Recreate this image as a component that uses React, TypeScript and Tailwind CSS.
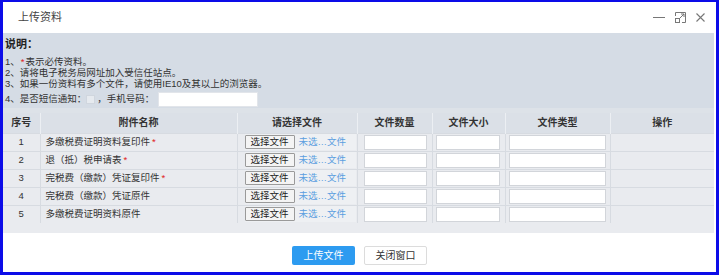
const rows = [
  { name: "多缴税费证明资料复印件", req: true },
  { name: "退（抵）税申请表", req: true },
  { name: "完税费（缴款）凭证复印件", req: true },
  { name: "完税费（缴款）凭证原件", req: false },
  { name: "多缴税费证明资料原件", req: false },
];

function RestoreIcon() {
  return (
    <svg width="11" height="11" viewBox="0 0 11 11" fill="none" stroke="#777" strokeWidth="1">
      <path d="M0.5 4V0.5H10.5V10.5H7" />
      <rect x="0.5" y="6.5" width="4" height="4" />
      <path d="M5 6L9 2M6 2H9V5" />
    </svg>
  );
}

export default function App() {
  return (
    <div className="w-[719px] h-[275px] bg-white border-[#0c0ce8] border-t-2 border-l-[3px] border-r-[3px] border-b-[3px] flex flex-col font-['Liberation_Sans','Noto_Sans_CJK_SC',sans-serif] text-[#333] overflow-hidden">
      {/* title bar */}
      <div className="h-[31px] shrink-0 flex items-center justify-between pl-[15px] pr-[11px]">
        <span className="text-[11px] text-[#444]">上传资料</span>
        <div className="flex items-center gap-[10px] text-[#777]">
          <span className="block w-[12px] h-px bg-[#777]" />
          <RestoreIcon />
          <svg width="9" height="9" viewBox="0 0 9 9" stroke="#777" strokeWidth="1.1">
            <path d="M0.5 0.5L8.5 8.5M8.5 0.5L0.5 8.5" />
          </svg>
        </div>
      </div>

      {/* notes */}
      <div className="h-[75px] shrink-0 bg-[#d5dce5] mr-[2px] pl-[2px] pt-[4px] text-[9.5px]">
        <div className="text-[11px] font-bold leading-[14px] text-[#222]">说明：</div>
        <div className="mt-[5px] leading-[11px]">
          <div>
            1、<span className="text-[#e02020] mx-[1px]">*</span>表示必传资料。
          </div>
          <div>2、请将电子税务局网址加入受信任站点。</div>
          <div>3、如果一份资料有多个文件，请使用IE10及其以上的浏览器。</div>
        </div>
        <div className="mt-[2px] h-[16px] flex items-center">
          <span>4、是否短信通知：</span>
          <span className="block w-[9px] h-[9px] bg-[#e6eaef] border border-[#d0d6de]" />
          <span className="ml-[2px]">，手机号码：</span>
          <span className="block ml-[4px] w-[100px] h-[15px] bg-white border border-[#e2e5ea]" />
        </div>
      </div>
      <div className="h-[5px] shrink-0 bg-[#dde2e8] mr-[2px]" />

      {/* table */}
      <div className="h-[120px] shrink-0 bg-[#e9ebef] mr-[2px]">
        <table className="w-[711px] table-fixed border-collapse text-[9.5px]">
          <colgroup>
            <col className="w-[37px]" />
            <col className="w-[197px]" />
            <col className="w-[120px]" />
            <col className="w-[75px]" />
            <col className="w-[73px]" />
            <col className="w-[105px]" />
            <col className="w-[104px]" />
          </colgroup>
          <thead>
            <tr className="h-[20px] bg-[#dbe0e7]">
              {["序号", "附件名称", "请选择文件", "文件数量", "文件大小", "文件类型", "操作"].map((h, i) => (
                <th
                  key={h}
                  className={`p-0 text-[10px] font-bold text-center text-[#333] border-[#eceff3] ${i > 0 ? "border-l" : ""}`}
                >
                  {h}
                </th>
              ))}
            </tr>
          </thead>
          <tbody>
            {rows.map((r, i) => (
              <tr key={r.name} className="h-[18px] bg-[#e9ebef] border-t border-[#d7dbe1]">
                <td className="p-0 text-center">{i + 1}</td>
                <td className="p-0 pl-[5px] border-l border-[#d7dbe1] whitespace-nowrap">
                  {r.name}
                  {r.req && <span className="text-[#e02020] ml-[2px]">*</span>}
                </td>
                <td className="p-0 pl-[7px] border-l border-[#d7dbe1]">
                  <div className="flex items-center h-[16px] w-[111px] bg-[#eef0f3]">
                    <span className="flex items-center justify-center w-[50px] h-[14px] bg-[#f4f4f4] border border-[#9a9a9a] rounded-[1px] text-[#222]">
                      选择文件
                    </span>
                    <span className="ml-[4px] text-[#5b9ee0] whitespace-nowrap">未选…文件</span>
                  </div>
                </td>
                <td className="p-0 pl-[6px] pr-[5px] border-l border-[#d7dbe1]">
                  <div className="h-[15px] bg-white border border-[#d2d5da]" />
                </td>
                <td className="p-0 pl-[3px] pr-[5px] border-l border-[#d7dbe1]">
                  <div className="h-[15px] bg-white border border-[#d2d5da]" />
                </td>
                <td className="p-0 pl-[3px] pr-[4px] border-l border-[#d7dbe1]">
                  <div className="h-[15px] bg-white border border-[#d2d5da]" />
                </td>
                <td className="p-0 border-l border-[#d7dbe1]" />
              </tr>
            ))}
          </tbody>
        </table>
      </div>

      {/* footer */}
      <div className="flex-1 flex items-start justify-center gap-[9px] pt-[13px]">
        <button className="w-[63px] h-[19px] bg-[#2d9bf0] text-white text-[10px] rounded-[2px]">上传文件</button>
        <button className="w-[63px] h-[19px] bg-white border border-[#dcdcdc] text-[#333] text-[10px] rounded-[2px]">
          关闭窗口
        </button>
      </div>
    </div>
  );
}
